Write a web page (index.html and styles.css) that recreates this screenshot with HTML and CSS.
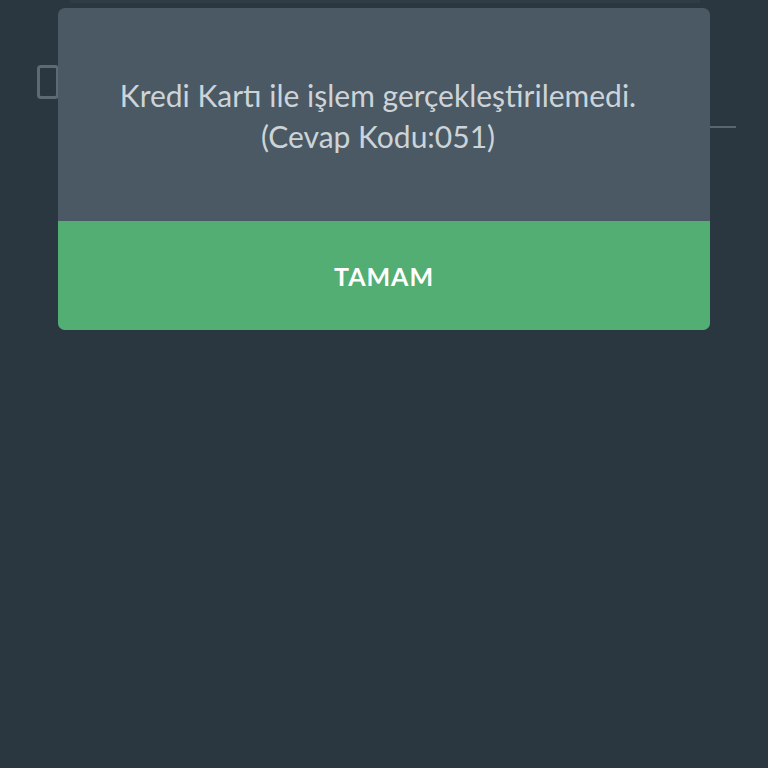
FILE: index.html
```html
<!DOCTYPE html>
<html lang="tr">
  <head>
    <meta charset="UTF-8" />
    <meta name="viewport" content="width=device-width, initial-scale=1.0" />
    <title>Ödeme</title>
    <link rel="stylesheet" href="styles.css">
  </head>
  <body>
    <div class="topbar"></div>
    <main class="page">
      <div class="row">
        <span class="checkbox"></span>
      </div>
      <div class="divider"></div>
    </main>

    <div class="dialog">
      <div class="message">
        <p>Kredi Kartı ile işlem gerçekleştirilemedi.</p>
        <p>(Cevap Kodu:051)</p>
      </div>
      <button class="okButton">TAMAM</button>
    </div>
  </body>
</html>
```

FILE: styles.css
```css
body {
  margin: 0;
  width: 768px;
  height: 768px;
  overflow: hidden;
  background-color: #2a3740;
  font-family: Lato, "Open Sans", sans-serif;
  position: relative;
}

.topbar {
  height: 3px;
  margin: 0 68px 0 70px;
  background-color: #2f3c45;
}

.page {
  padding: 62px 32px 0 37px;
}
.row {
  height: 61px;
}
.checkbox {
  display: block;
  width: 16px;
  height: 28px;
  border: 3px solid #5d6a73;
  border-radius: 4px;
}
.divider {
  height: 2px;
  margin-left: 120px;
  background-color: #59666f;
}

.dialog {
  position: absolute;
  top: 8px;
  left: 58px;
  width: 652px;
  border-radius: 7px;
  overflow: hidden;
  background-color: #4a5963;
}
.message {
  height: 213px;
  box-sizing: border-box;
  padding: 67px 12px 0 0;
  text-align: center;
  color: #cdd4d9;
  font-size: 30px;
  line-height: 41px;
}
.message p {
  margin: 0;
}
.okButton {
  display: block;
  width: 100%;
  height: 109px;
  border: none;
  background-color: #53ae73;
  color: #ffffff;
  font-family: Lato, "Open Sans", sans-serif;
  font-weight: bold;
  font-size: 25px;
  letter-spacing: 1px;
  padding: 0;
}
```
